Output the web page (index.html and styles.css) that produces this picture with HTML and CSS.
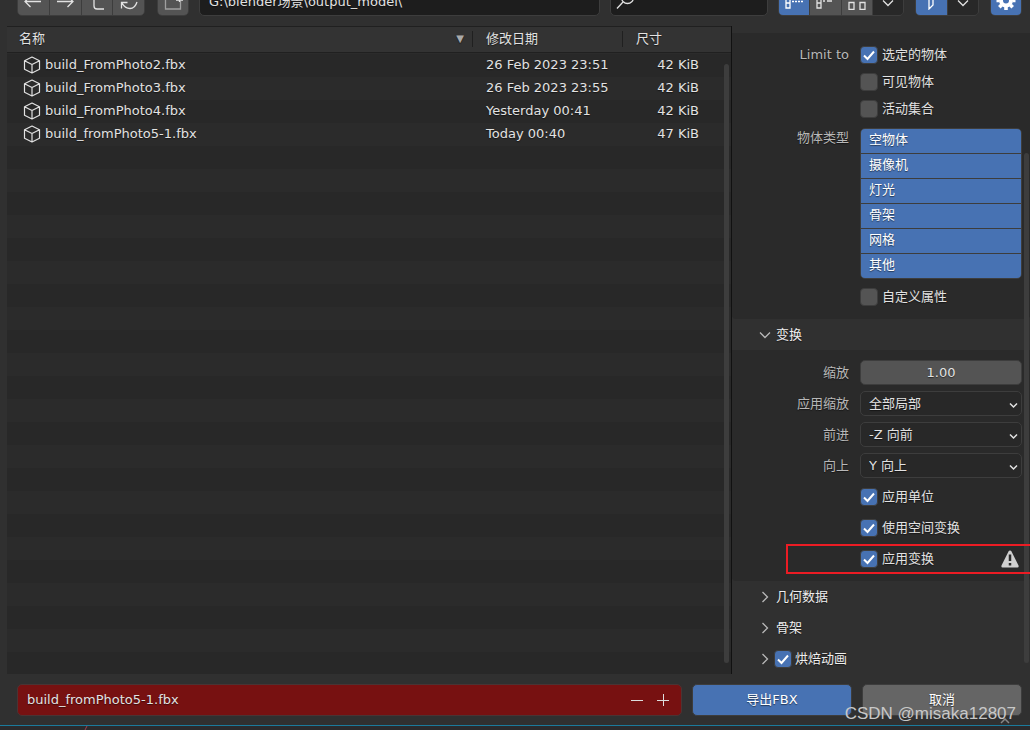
FILE: index.html
```html
<!DOCTYPE html>
<html lang="zh-CN">
<head>
<meta charset="utf-8">
<title>导出FBX</title>
<link rel="stylesheet" href="styles.css">
</head>
<body>
<svg class="defs" aria-hidden="true">
  <symbol id="cube" viewBox="0 0 18 18"><path d="M9 1 L16.5 4.7 V13.3 L9 17 L1.5 13.3 V4.7 Z M1.5 4.7 L9 8.5 L16.5 4.7 M9 8.5 V17" fill="none" stroke="currentColor" stroke-width="1.2" stroke-linejoin="round"/></symbol>
  <symbol id="down" viewBox="0 0 12 12"><path d="M1 3.5 L6 8.5 L11 3.5" fill="none" stroke="currentColor" stroke-width="1.3"/></symbol>
  <symbol id="small-down" viewBox="0 0 12 12"><path d="M2 4.5 L5.500 8 L9 4.5" fill="none" stroke="currentColor" stroke-width="1.5"/></symbol>
  <symbol id="right" viewBox="0 0 12 12"><path d="M3.5 1 L8.5 6 L3.5 11" fill="none" stroke="currentColor" stroke-width="1.3"/></symbol>
</svg>
<div class="window">
  <header class="toolbar">
    <div class="group nav">
      <button type="button" aria-label="后退"><svg width="20" height="20" viewBox="0 0 20 20"><path d="M18 11.5 H2 M7.5 6 L2 11.5 L7.5 17"/></svg></button>
      <button type="button" aria-label="前进"><svg width="20" height="20" viewBox="0 0 20 20"><path d="M2 11.5 H18 M12.500 6 L18 11.5 L12.500 17"/></svg></button>
      <button type="button" aria-label="上级目录"><svg width="20" height="20" viewBox="0 0 20 20"><path d="M7 2 V16 Q7 19 10 19 H17"/></svg></button>
      <button type="button" aria-label="刷新"><svg width="20" height="20" viewBox="0 0 20 20"><path d="M2.500 18.500 V12.500 H8.500 M3 13 Q6 18.500 11 18.500 Q16 18.500 18 12"/></svg></button>
    </div>
    <div class="group new"><button type="button" aria-label="新建文件夹"><svg width="20" height="20" viewBox="0 0 20 20"><path d="M10 4 H2.500 V19 H17.500 V11" stroke="#a0a0a0"/><path d="M13 10 H20 M16.500 6 V12"/></svg></button></div>
    <input class="field path" aria-label="路径" value="G:\blender场景\output_model\">
    <label class="field search"><svg width="20" height="20" viewBox="0 0 20 20"><circle cx="12.500" cy="7.500" r="6"/><path d="M8 12 L2 18.500"/></svg><input aria-label="搜索"></label>
    <div class="group view">
      <button type="button" class="on" aria-label="列表"><svg width="20" height="20" viewBox="0 0 20 20"><path d="M2 2 H6 V18 H2 Z M2 8 H6 M2 13 H6"/><path d="M8 11.500 H20" stroke-dasharray="2 1"/></svg></button>
      <button type="button" aria-label="详情"><svg width="20" height="20" viewBox="0 0 20 20"><path d="M2 2 H6 V18 H2 Z M2 8 H6 M2 13 H6 M8 11 H10 M12 11 H17"/></svg></button>
      <button type="button" aria-label="缩略图"><svg width="20" height="20" viewBox="0 0 20 20"><path d="M2 12.500 H7 V19.500 H2 Z M13 12.500 H18 V19.500 H13 Z"/></svg></button>
      <button type="button" class="dark" aria-label="显示设置"><svg width="12" height="12"><use href="#down"/></svg></button>
    </div>
    <div class="group filter">
      <button type="button" class="on" aria-label="过滤"><svg width="20" height="20" viewBox="0 0 20 20"><path d="M2 2 H18 L12 9 V15 L8 19 V9 Z"/></svg></button>
      <button type="button" class="dark" aria-label="过滤设置"><svg width="12" height="12"><use href="#down"/></svg></button>
    </div>
    <div class="group gear"><button type="button" class="on" aria-label="选项"><svg width="20" height="20" viewBox="0 0 20 20"><circle cx="10" cy="10.500" r="5" stroke-width="4"/><path d="M10 1 V4 M10 17 V20 M0.500 10.500 H3.500 M16.500 10.500 H19.500 M3.300 3.800 L5.500 6 M14.500 15 L16.700 17.200 M3.300 17.200 L5.500 15 M14.500 6 L16.700 3.800" stroke-width="3.600"/></svg></button></div>
  </header>
  <main class="content">
    <section class="browser">
      <table class="files">
        <colgroup><col><col class="c-date"><col class="c-size"></colgroup>
        <thead><tr><th><div class="name-head">名称<span class="sort">▼</span></div></th><th><div class="split">修改日期</div></th><th><div class="split">尺寸</div></th></tr></thead>
        <tbody>
          <tr><td><div class="file"><svg width="18" height="18"><use href="#cube"/></svg>build_FromPhoto2.fbx</div></td><td>26 Feb 2023 23:51</td><td>42 KiB</td></tr>
          <tr><td><div class="file"><svg width="18" height="18"><use href="#cube"/></svg>build_FromPhoto3.fbx</div></td><td>26 Feb 2023 23:55</td><td>42 KiB</td></tr>
          <tr><td><div class="file"><svg width="18" height="18"><use href="#cube"/></svg>build_FromPhoto4.fbx</div></td><td>Yesterday 00:41</td><td>42 KiB</td></tr>
          <tr><td><div class="file"><svg width="18" height="18"><use href="#cube"/></svg>build_fromPhoto5-1.fbx</div></td><td>Today 00:40</td><td>47 KiB</td></tr>
        </tbody>
      </table>
      <div class="scroll list-scroll"></div>
    </section>
    <aside class="options">
      <div class="panel include">
        <div class="row tight"><span class="name">Limit to</span><label class="check"><input type="checkbox" checked>选定的物体</label></div>
        <div class="row tight"><span class="name"></span><label class="check"><input type="checkbox">可见物体</label></div>
        <div class="row tight"><span class="name"></span><label class="check"><input type="checkbox">活动集合</label></div>
        <div class="row types"><span class="name">物体类型</span>
          <div class="enum"><button type="button">空物体</button><button type="button">摄像机</button><button type="button">灯光</button><button type="button">骨架</button><button type="button">网格</button><button type="button">其他</button></div></div>
        <div class="row"><span class="name"></span><label class="check"><input type="checkbox">自定义属性</label></div>
      </div>
      <button type="button" class="head open"><svg width="12" height="12"><use href="#down"/></svg>变换</button>
      <div class="panel transform">
        <div class="row"><label class="name" for="scale">缩放</label><input class="number" id="scale" value="1.00"></div>
        <div class="row"><label class="name" for="apply">应用缩放</label><span class="drop"><select id="apply"><option>全部局部</option></select><svg width="12" height="12"><use href="#small-down"/></svg></span></div>
        <div class="row"><label class="name" for="forward">前进</label><span class="drop"><select id="forward"><option>-Z 向前</option></select><svg width="12" height="12"><use href="#small-down"/></svg></span></div>
        <div class="row"><label class="name" for="up">向上</label><span class="drop"><select id="up"><option>Y 向上</option></select><svg width="12" height="12"><use href="#small-down"/></svg></span></div>
        <div class="row"><span class="name"></span><label class="check"><input type="checkbox" checked>应用单位</label></div>
        <div class="row"><span class="name"></span><label class="check"><input type="checkbox" checked>使用空间变换</label></div>
        <div class="row marked"><span class="name"></span><label class="check"><input type="checkbox" checked>应用变换</label><svg class="warn" width="18" height="18" viewBox="0 0 18 18"><path d="M9 0.500 Q10 0.500 10.500 1.500 L17.500 15.500 Q18 17.500 16.500 17.500 H1.500 Q0 17.500 0.500 15.500 L7.500 1.500 Q8 0.500 9 0.500 Z" fill="#d0d0d0"/><path d="M9 4.500 V11 M9 13 V15.500" stroke="#2a2a2a" stroke-width="2.500"/></svg></div>
      </div>
      <button type="button" class="head"><svg width="12" height="12"><use href="#right"/></svg>几何数据</button>
      <button type="button" class="head"><svg width="12" height="12"><use href="#right"/></svg>骨架</button>
      <div class="head with-check"><svg width="12" height="12"><use href="#right"/></svg><label class="check"><input type="checkbox" checked>烘焙动画</label></div>
      <div class="scroll option-scroll"></div>
    </aside>
  </main>
  <footer class="actions">
    <div class="filename"><input aria-label="文件名" value="build_fromPhoto5-1.fbx"><button type="button" aria-label="减少"><svg width="12" height="12" viewBox="0 0 12 12"><path d="M0 6.500 H12"/></svg></button><button type="button" aria-label="增加"><svg width="12" height="12" viewBox="0 0 12 12"><path d="M0 6.500 H12 M6.500 0 V12"/></svg></button></div>
    <button type="button" class="action export">导出FBX</button>
    <button type="button" class="action cancel">取消</button>
  </footer>
  <div class="below"><svg width="4" height="4" viewBox="0 0 4 4"><path d="M3 0 L1 4" stroke="#a04050"/></svg></div>
  <svg class="corner" width="16" height="10" viewBox="0 0 16 10"><path d="M4 7 L8 3 L12 7" fill="none" stroke="#888" stroke-width="1.500"/></svg>
  <div class="watermark">CSDN @misaka12807</div>
</div>
</body>
</html>
```
FILE: styles.css
```css
* { box-sizing: border-box; }
body {
  margin: 0;
  background: #303030;
  color: #e2e2e2;
  font: 13px/20px "DejaVu Sans", "Noto Sans CJK SC", sans-serif;
  text-shadow: 0 1px 1px rgba(0, 0, 0, .5);
}
button, input, select { font: inherit; color: inherit; text-shadow: inherit; margin: 0; }
button { border: 0; padding: 0; display: flex; align-items: center; justify-content: center; }
svg { flex: none; display: block; }
.defs { position: absolute; width: 0; height: 0; }
.window { position: relative; height: 100vh; display: flex; flex-direction: column; overflow: hidden; }

.toolbar { height: 26px; flex: none; display: flex; align-items: flex-end; padding: 0 8px 10px 17px; overflow: hidden; }
.group { display: flex; gap: 1px; height: 32px; border: 1px solid #3d3d3d; border-radius: 5px; overflow: hidden; background: #3d3d3d; }
.group button { flex: 1; background: #545454; }
.group .on { background: #4772b3; color: #fff; }
.group .dark { background: #282828; padding-top: 6px; }
.toolbar svg { fill: none; stroke: currentColor; stroke-width: 1.3; }
.nav { width: 128px; margin-right: 12px; }
.new { width: 32px; margin-right: 10px; }
.field { height: 32px; background: #1d1d1d; border: 1px solid #3d3d3d; border-radius: 5px; }
.path { flex: 405; min-width: 0; padding: 0 9px; margin-right: 10px; }
.search { flex: 157; min-width: 0; display: flex; align-items: center; padding: 0 4px; margin-right: 10px; }
.search input { flex: 1; min-width: 0; background: none; border: 0; }
.view { width: 126px; margin-right: 11px; }
.filter { width: 64px; margin-right: 11px; }
.gear { width: 32px; }

.content { flex: 1; min-height: 0; display: flex; }
.browser {
  position: relative; flex: 1; min-width: 0; margin-left: 7px;
  border-right: 1px solid #111;
  background: linear-gradient(#282828 50%, #2b2b2b 50%) 0 28px / 100% 46px;
}
.files { width: 100%; table-layout: fixed; border-collapse: separate; border-spacing: 0; }
.c-date { width: 150px; }
.c-size { width: 109px; }
.files th { height: 27px; padding: 0 0 1px; background: #333; border-top: 1px solid #202020; border-bottom: 1px solid #202020; font-weight: 400; text-align: left; }
.name-head { display: flex; justify-content: space-between; padding: 0 8px 0 12px; }
.sort { color: #aaa; font-size: 10px; }
.split { height: 16px; line-height: 16px; border-left: 1px solid #202020; padding-left: 13px; }
.files td { height: 23px; padding: 1px 0 0 14px; }
.files td:first-child { padding-left: 16px; }
.files td:last-child { padding-right: 32px; text-align: right; }
.file { display: flex; align-items: center; gap: 4px; }
.scroll { position: absolute; width: 5px; border-radius: 3px; background: #3d3d3d; }
.list-scroll { right: 2px; top: 38px; bottom: 11px; }
.option-scroll { right: 1px; top: 127px; bottom: 11px; }

.options { position: relative; flex: none; width: 298px; padding-top: 7px; }
.panel { background: #2a2a2a; padding: 0 8px 0 0; display: flex; flex-direction: column; gap: 6px; border-radius: 0 0 4px 4px; }
.include { padding-top: 9px; padding-bottom: 10px; gap: 2px; }
.transform { padding-top: 10px; padding-bottom: 10px; }
.row { display: flex; align-items: center; height: 25px; }
.name { width: 117px; margin-right: 11px; text-align: right; color: #b8b8b8; flex: none; }
.types { height: auto; align-items: flex-start; padding: 5px 0 3px; }
.enum { flex: 1; display: flex; flex-direction: column; gap: 1px; border: 1px solid #3d3d3d; border-radius: 5px; overflow: hidden; background: #3d3d3d; }
.enum button { height: 24px; background: #4772b3; justify-content: flex-start; padding: 0 0 2px 8px; color: #fff; }
.check { display: flex; align-items: center; gap: 4px; }
.check input { appearance: none; width: 18px; height: 18px; border: 1px solid #3d3d3d; border-radius: 4px; background: #545454; }
.check input:checked { background: #4772b3 url("data:image/svg+xml,%3Csvg xmlns='http://www.w3.org/2000/svg' viewBox='0 0 16 16'%3E%3Cpath d='M3 8.500L6.500 12L13 4.500' fill='none' stroke='white' stroke-width='2'/%3E%3C/svg%3E") center / 16px 16px; }
.number { flex: 1; min-width: 0; height: 25px; text-align: center; background: #545454; border: 1px solid #3d3d3d; border-radius: 5px; }
.drop { flex: 1; min-width: 0; position: relative; }
.drop select { appearance: none; width: 100%; height: 25px; padding: 0 8px; background: #282828; border: 1px solid #3d3d3d; border-radius: 5px; display: block; }
.drop svg { position: absolute; right: 2px; top: 8px; }
.marked { position: relative; }
.marked::after { content: ""; position: absolute; left: 54px; right: -10px; top: -2px; bottom: -3px; border: 2px solid #ec1c24; z-index: 1; }
.warn { margin-left: auto; margin-right: 3px; }
.head { width: 100%; height: 31px; display: flex; align-items: center; justify-content: flex-start; gap: 5px; padding-left: 27px; background: #303030; color: #eee; }
.head > svg { color: #b8b8b8; }
.with-check, .with-check .check { gap: 3px; }

.actions { flex: none; display: flex; padding: 10px 8px 9px 17px; gap: 10px; height: 51px; }
.filename { flex: 1; min-width: 0; display: flex; align-items: center; gap: 14px; padding: 0 12px 0 9px; background: #771111; border: 1px solid #4a3434; border-radius: 5px; }
.filename input { flex: 1; min-width: 0; border: 0; padding: 0; background: none; }
.filename button { background: none; }
.filename svg { stroke: #ddd; }
.action { width: 160px; border: 1px solid #3d3d3d; border-radius: 5px; color: #fff; }
.export { background: #4772b3; }
.cancel { background: #656565; }
.below { flex: none; height: 5px; border-top: 1px solid #1b7a9c; background: #2b2a2c; padding-left: 84px; }
.corner { position: absolute; right: 17px; bottom: 4px; }
.watermark { position: absolute; right: 14px; bottom: 6px; color: #c8c8c8; font: 17px/20px "Liberation Sans", sans-serif; text-shadow: none; }
```
